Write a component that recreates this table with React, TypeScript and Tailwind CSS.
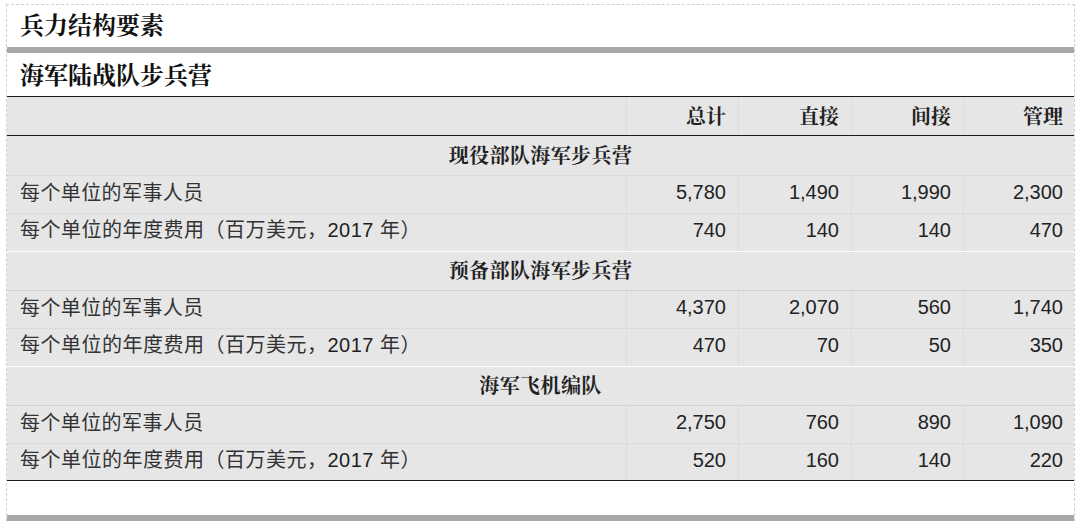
import React from "react";

const serif = { fontFamily: '"Noto Serif CJK SC", "Noto Sans CJK SC", serif' };

type Row = { label: string; v: string[] };
type Section = { title: string; rows: Row[] };

const sections: Section[] = [
  {
    title: "现役部队海军步兵营",
    rows: [
      { label: "每个单位的军事人员", v: ["5,780", "1,490", "1,990", "2,300"] },
      { label: "cost", v: ["740", "140", "140", "470"] },
    ],
  },
  {
    title: "预备部队海军步兵营",
    rows: [
      { label: "每个单位的军事人员", v: ["4,370", "2,070", "560", "1,740"] },
      { label: "cost", v: ["470", "70", "50", "350"] },
    ],
  },
  {
    title: "海军飞机编队",
    rows: [
      { label: "每个单位的军事人员", v: ["2,750", "760", "890", "1,090"] },
      { label: "cost", v: ["520", "160", "140", "220"] },
    ],
  },
];

const cols = "grid grid-cols-[619px_112px_113px_112px_112px]";

function Label({ text }: { text: string }) {
  if (text === "cost") {
    return (
      <span className="font-['Liberation_Sans','Noto_Sans_CJK_SC',sans-serif] tracking-[0.5px]">
        <span className="text-[20px]">每个单位的年度费用（百万美元，</span>
        <span className="text-[20px] text-[#1e1e1e]">2017 </span>
        <span className="text-[20px]">年）</span>
      </span>
    );
  }
  return (
    <span className="text-[20px] tracking-[0.4px] font-['Noto_Sans_CJK_SC',sans-serif]">{text}</span>
  );
}

export default function App() {
  return (
    <div className="w-[1080px] h-[529px] bg-white">
      <div className="ml-[6px] pt-[4px] w-[1069px]">
        <div className="border-l border-t border-r border-dashed border-[#cfcfcf]">
          <div
            className="h-[42px] flex items-center pl-[13px] pb-[4px] text-[24px] font-bold text-[#111]"
            style={serif}
          >
            兵力结构要素
          </div>
          <div className="h-[6px] bg-[#a8a8a8]" />
          <div
            className="h-[44px] flex items-center pl-[13px] pb-[2px] text-[24px] font-bold text-[#111] border-b border-[#1a1a1a]"
            style={serif}
          >
            海军陆战队步兵营
          </div>
          <div className="bg-[#e6e6e6]">
            <div className={`${cols} h-[39px] border-b border-[#1a1a1a]`}>
              <div />
              {["总计", "直接", "间接", "管理"].map((h) => (
                <div
                  key={h}
                  className="flex items-center justify-end pr-[12px] text-[20px] font-bold text-[#222] border-l border-dotted border-[#d4d4d4]"
                  style={serif}
                >
                  {h}
                </div>
              ))}
            </div>
            {sections.map((s, si) => (
              <div key={s.title}>
                <div
                  className={`h-[40px] flex items-center justify-center pb-[2px] text-[20px] tracking-[0.4px] font-bold text-[#222] border-b border-dotted border-[#d2d2d2] ${
                    si > 0 ? "border-t border-t-white border-solid" : ""
                  }`}
                  style={serif}
                >
                  {s.title}
                </div>
                {s.rows.map((r, ri) => {
                  const last = si === sections.length - 1 && ri === s.rows.length - 1;
                  return (
                    <div
                      key={ri}
                      className={`${cols} ${ri === 0 ? "h-[38px]" : "h-[37px]"} ${
                        last
                          ? "border-b border-[#1a1a1a]"
                          : ri === 0
                          ? "border-b border-dotted border-[#d2d2d2]"
                          : ""
                      } text-[#333]`}
                    >
                      <div className="flex items-center pl-[13px] pb-[5px]">
                        <Label text={r.label} />
                      </div>
                      {r.v.map((v, vi) => (
                        <div
                          key={vi}
                          className="flex items-center justify-end pr-[12px] pb-[5px] text-[20px] text-[#222] font-['Liberation_Sans',sans-serif] border-l border-dotted border-[#d4d4d4]"
                        >
                          {v}
                        </div>
                      ))}
                    </div>
                  );
                })}
              </div>
            ))}
          </div>
          <div className="h-[34px]" />
          <div className="h-[6px] bg-[#a8a8a8]" />
        </div>
      </div>
    </div>
  );
}
